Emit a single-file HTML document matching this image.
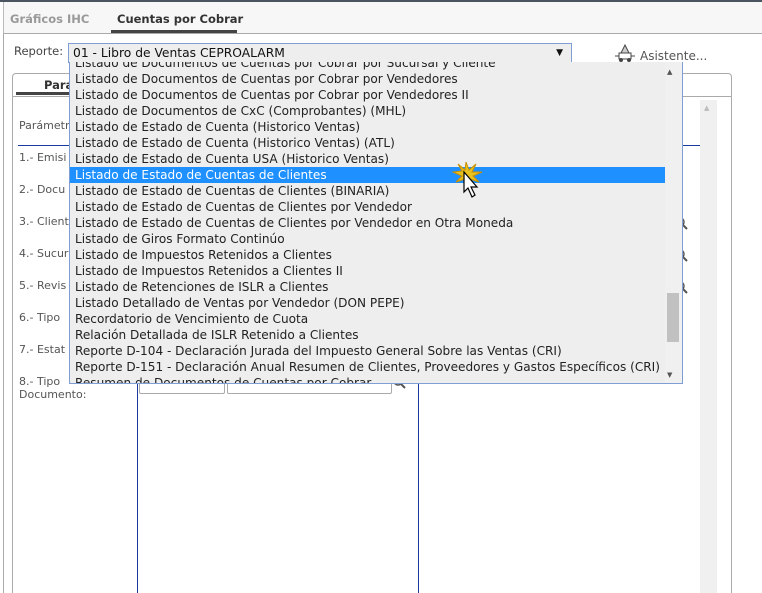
<!DOCTYPE html>
<html><head><meta charset="utf-8"><style>
*{margin:0;padding:0;box-sizing:border-box}
html,body{width:762px;height:593px;overflow:hidden}
body{background:#fff;font-family:"DejaVu Sans","Liberation Sans",sans-serif;position:relative;color:#333}
.a{position:absolute}
.lbl{position:absolute;left:19px;font-size:11px;color:#555;white-space:nowrap}
#list{position:absolute;left:69px;top:62px;width:614px;height:322px;background:#eee;border:1px solid #7f9fd3;border-top:none;overflow:hidden}
#list div{height:16px;line-height:16px;font-size:12.1px;padding-left:5px;white-space:nowrap;color:#222}
#list .sel{background:#1e90ff;color:#fff}
</style></head><body>
<div class="a" style="left:0;top:0;width:762px;height:2px;background:#4a5560"></div>
<div class="a" style="left:3px;top:2px;width:759px;height:32px;background:#f7f7f7;border-left:1px solid #bbb;border-bottom:1px solid #aaa"></div>
<div class="a" style="left:10px;top:12px;font-size:11.5px;font-weight:bold;color:#999">Gráficos IHC</div>
<div class="a" style="left:117px;top:12px;font-size:11.5px;font-weight:bold;color:#333">Cuentas por Cobrar</div>
<div class="a" style="left:111px;top:30px;width:126px;height:3px;background:#444"></div>
<div class="a" style="left:3px;top:34px;width:1px;height:560px;background:#aaa"></div>
<div class="a" style="left:14px;top:44px;font-size:11.5px;color:#444">Reporte:</div>
<div class="a" style="left:68px;top:43px;width:504px;height:20px;border:1px solid #7f9fd3;background:#eee;font-size:12.3px;line-height:18px;padding-left:4px;color:#111">01 - Libro de Ventas CEPROALARM<span style="position:absolute;right:8px;top:0;font-size:9px">▼</span></div>
<svg class="a" style="left:614px;top:44px" width="22" height="20" viewBox="0 0 22 20"><path d="M11 1 L15 9 L7 9 Z" fill="#ccc" stroke="#444"/><rect x="5" y="9" width="12" height="6" fill="#fff" stroke="#444"/><circle cx="7" cy="16" r="2" fill="#444"/><circle cx="15" cy="16" r="2" fill="#444"/><path d="M1 12 L5 12 M17 12 L21 12" stroke="#444"/></svg>
<div class="a" style="left:640px;top:49px;font-size:12px;color:#555">Asistente...</div>
<div class="a" style="left:12px;top:73px;width:720px;height:530px;border:1px solid #aaa;border-radius:4px 4px 0 0"></div>
<div class="a" style="left:12px;top:96px;width:720px;height:1px;background:#aaa"></div>
<div class="a" style="left:44px;top:78px;font-size:11.5px;font-weight:bold;color:#333">Pará</div>
<div class="a" style="left:16px;top:92px;width:54px;height:3px;background:#444"></div>
<div class="a" style="left:700px;top:100px;width:17px;height:493px;background:#f0f0f0"></div>
<div class="a" style="left:704px;top:104px;font-size:7px;color:#bbb">▲</div>
<div class="a" style="left:18px;top:145px;width:682px;height:1px;background:#1a3aa0"></div>
<div class="lbl" style="top:119px">Parámetr</div>
<div class="lbl" style="top:151px">1.- Emisi</div>
<div class="lbl" style="top:183px">2.- Docu</div>
<div class="lbl" style="top:215px">3.- Client</div>
<div class="lbl" style="top:247px">4.- Sucur</div>
<div class="lbl" style="top:279px">5.- Revis</div>
<div class="lbl" style="top:311px">6.- Tipo</div>
<div class="lbl" style="top:343px">7.- Estat</div>
<div class="lbl" style="top:375px">8.- Tipo<br>Documento:</div>
<div class="a" style="left:137px;top:384px;width:1px;height:209px;background:#1a3aa0"></div>
<div class="a" style="left:418px;top:384px;width:1px;height:209px;background:#1a3aa0"></div>
<div class="a" style="left:139px;top:378px;width:86px;height:16px;border:1px solid #aaa;border-radius:2px"></div>
<div class="a" style="left:227px;top:378px;width:165px;height:16px;border:1px solid #aaa;border-radius:2px"></div>
<svg class="a" style="left:393px;top:376px" width="14" height="14"><circle cx="5" cy="5" r="4" fill="none" stroke="#555" stroke-width="1.5"/><path d="M8 8 L12 12" stroke="#555" stroke-width="2"/></svg>
<svg class="a" style="left:675px;top:217px" width="14" height="14"><circle cx="5" cy="5" r="4" fill="none" stroke="#555" stroke-width="1.5"/><path d="M8 8 L12 12" stroke="#555" stroke-width="2"/></svg>
<svg class="a" style="left:675px;top:249px" width="14" height="14"><circle cx="5" cy="5" r="4" fill="none" stroke="#555" stroke-width="1.5"/><path d="M8 8 L12 12" stroke="#555" stroke-width="2"/></svg>
<svg class="a" style="left:675px;top:281px" width="14" height="14"><circle cx="5" cy="5" r="4" fill="none" stroke="#555" stroke-width="1.5"/><path d="M8 8 L12 12" stroke="#555" stroke-width="2"/></svg>
<div id="list">
<div style="margin-top:-7px">Listado de Documentos de Cuentas por Cobrar por Sucursal y Cliente</div>
<div>Listado de Documentos de Cuentas por Cobrar por Vendedores</div>
<div>Listado de Documentos de Cuentas por Cobrar por Vendedores II</div>
<div>Listado de Documentos de CxC (Comprobantes) (MHL)</div>
<div>Listado de Estado de Cuenta (Historico Ventas)</div>
<div>Listado de Estado de Cuenta (Historico Ventas) (ATL)</div>
<div>Listado de Estado de Cuenta USA (Historico Ventas)</div>
<div class="sel">Listado de Estado de Cuentas de Clientes</div>
<div>Listado de Estado de Cuentas de Clientes (BINARIA)</div>
<div>Listado de Estado de Cuentas de Clientes por Vendedor</div>
<div>Listado de Estado de Cuentas de Clientes por Vendedor en Otra Moneda</div>
<div>Listado de Giros Formato Continúo</div>
<div>Listado de Impuestos Retenidos a Clientes</div>
<div>Listado de Impuestos Retenidos a Clientes II</div>
<div>Listado de Retenciones de ISLR a Clientes</div>
<div>Listado Detallado de Ventas por Vendedor (DON PEPE)</div>
<div>Recordatorio de Vencimiento de Cuota</div>
<div>Relación Detallada de ISLR Retenido a Clientes</div>
<div>Reporte D-104 - Declaración Jurada del Impuesto General Sobre las Ventas (CRI)</div>
<div>Reporte D-151 - Declaración Anual Resumen de Clientes, Proveedores y Gastos Específicos (CRI)</div>
<div>Resumen de Documentos de Cuentas por Cobrar</div>
<div class="a" style="left:595px;top:0;width:18px;height:322px;background:#f0f0f0;padding:0"></div>
<div class="a" style="left:597px;top:231px;width:12px;height:49px;background:#c1c1c1;padding:0"></div>
<div class="a" style="left:597px;top:2px;font-size:7px;color:#555;padding:0">▲</div>
<div class="a" style="left:597px;top:305px;font-size:7px;color:#555;padding:0">▼</div>
</div>
<svg class="a" style="left:452px;top:160px" width="40" height="44" viewBox="0 0 40 44">
<path d="M14 2 L17 10 L24 4 L20 12 L30 12 L21 16 L27 22 L18 19 L16 28 L13 19 L4 22 L10 16 L1 12 L10 11 L6 4 L13 10 Z" fill="#e8c020" stroke="#c89000" stroke-width="1"/>
<path d="M12 12 L12 32 L16 28 L20 37 L23 35 L19 27 L25 27 Z" fill="#fff" stroke="#000" stroke-width="1.2"/>
</svg>
</body></html>
